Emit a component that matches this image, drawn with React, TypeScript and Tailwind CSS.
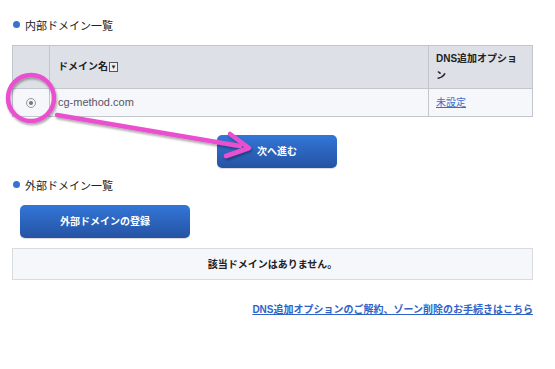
import React from 'react';

const font = { fontFamily: '"Liberation Sans", "Noto Sans CJK JP", sans-serif' };

const Heading: React.FC<{ label: string }> = ({ label }) => (
  <div className="flex items-center gap-[5px] pl-[1px]">
    <span className="w-[7px] h-[7px] rounded-full bg-[#3a72d4] -mt-[3px]" />
    <span className="text-[11px] text-[#222]">{label}</span>
  </div>
);

const BlueButton: React.FC<{ label: string; className?: string }> = ({ label, className }) => (
  <button
    className={`h-[33px] rounded-[5px] bg-gradient-to-b from-[#3376d8] to-[#2553a3] text-white text-[10px] font-bold shadow-[0_1px_1px_rgba(0,0,0,0.15)] ${className ?? ''}`}
  >
    {label}
  </button>
);

export default function App() {
  return (
    <div className="relative w-[555px] h-[369px] bg-white px-3 pt-[18px] overflow-hidden" style={font}>
      <Heading label="内部ドメイン一覧" />

      {/* internal domain table */}
      <table className="mt-[10px] w-[521px] border-collapse text-[10px] text-[#222]">
        <thead>
          <tr className="bg-[#dde1e7] h-[43px]">
            <th className="w-[37px] border border-[#c3c7cd]" />
            <th className="border border-[#c3c7cd] text-left font-bold pl-[8px]">
              <span className="inline-flex items-center">
                ドメイン名
                <span className="ml-[1px] inline-flex items-center justify-center w-[9px] h-[10px] border border-[#555] bg-[#eee] text-[6px] leading-none">▼</span>
              </span>
            </th>
            <th className="w-[104px] border border-[#c3c7cd] text-left font-bold pl-[7px] pr-[10px] leading-[17px]">
              DNS追加オプション
            </th>
          </tr>
        </thead>
        <tbody>
          <tr className="bg-[#f5f7fa] h-[28px]">
            <td className="border border-[#c3c7cd] text-center">
              <span className="inline-block w-[10px] h-[10px] rounded-full border border-[#999] bg-[#f3f3f3] relative align-middle">
                <span className="absolute left-[2px] top-[2px] w-[4px] h-[4px] rounded-full bg-[#777]" />
              </span>
            </td>
            <td className="border border-[#c3c7cd] pl-[8px] text-[11px] text-[#556]">cg-method.com</td>
            <td className="border border-[#c3c7cd] pl-[7px]">
              <a className="text-[#3a6fc9] underline">未設定</a>
            </td>
          </tr>
        </tbody>
      </table>

      <div className="mt-[18px] ml-[205px]">
        <BlueButton label="次へ進む" className="w-[120px]" />
      </div>

      <div className="mt-[10px]">
        <Heading label="外部ドメイン一覧" />
      </div>

      <div className="mt-[11px] ml-[8px]">
        <BlueButton label="外部ドメインの登録" className="w-[170px]" />
      </div>

      <div className="mt-[10px] w-[521px] h-[32px] border border-[#d8dbe0] bg-[#f5f7fa] flex items-center justify-center text-[10px] font-bold text-[#222]">
        該当ドメインはありません。
      </div>

      <div className="mt-[22px] w-[521px] flex justify-end">
        <a className="text-[10px] font-bold text-[#2f63c7] underline">DNS追加オプションのご解約、ゾーン削除のお手続きはこちら</a>
      </div>

      {/* annotation overlay */}
      <svg className="absolute left-0 top-0 pointer-events-none" width="555" height="369">
        <defs>
          <filter id="sh" x="-20%" y="-20%" width="140%" height="140%">
            <feDropShadow dx="1" dy="2" stdDeviation="1.2" floodColor="#000" floodOpacity="0.35" />
          </filter>
        </defs>
        <g filter="url(#sh)">
          <circle cx="31" cy="98" r="23" fill="none" stroke="#ea4fd0" strokeWidth="4.5" />
          <path d="M57 115 L240 146" stroke="#ea4fd0" strokeWidth="4.5" strokeLinecap="round" fill="none" />
          <path d="M230 134 L249 148 L226 156" stroke="#ea4fd0" strokeWidth="4.5" strokeLinecap="round" strokeLinejoin="round" fill="none" />
        </g>
      </svg>
    </div>
  );
}
